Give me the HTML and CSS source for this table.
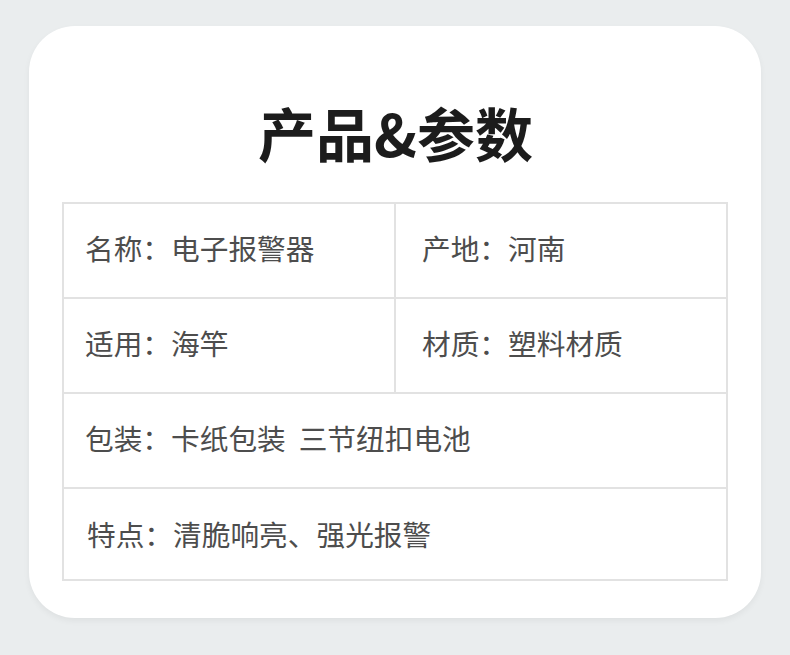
FILE: index.html
```html
<!DOCTYPE html>
<html lang="zh-CN">
<head>
<meta charset="utf-8">
<link rel="stylesheet" href="styles.css">
</head>
<body>
<div class="page">
  <div class="card">
    <h1 class="title">产品&amp;参数</h1>
    <table class="params">
      <tr>
        <td class="cell left">名称：电子报警器</td>
        <td class="cell right">产地：河南</td>
      </tr>
      <tr>
        <td class="cell left">适用：海竿</td>
        <td class="cell right">材质：塑料材质</td>
      </tr>
      <tr>
        <td class="cell left" colspan="2">包装：卡纸包装&nbsp;&nbsp;三节纽扣电池</td>
      </tr>
      <tr>
        <td class="cell left last" colspan="2">特点：清脆响亮、强光报警</td>
      </tr>
    </table>
  </div>
</div>
</body>
</html>
```
FILE: styles.css
```css
html, body {
  margin: 0;
  padding: 0;
  background: #eaedee;
}
.page {
  width: 790px;
  height: 655px;
  padding: 26px 29px 0 29px;
  box-sizing: border-box;
}
.card {
  width: 732px;
  height: 592px;
  background: #ffffff;
  border-radius: 46px;
  box-shadow: 0 3px 6px rgba(0,0,0,0.05);
  box-sizing: border-box;
  padding: 0 32px 0 33px;
  display: flex;
  flex-direction: column;
  align-items: stretch;
}
.title {
  margin: 0;
  height: 176px;
  display: flex;
  align-items: center;
  justify-content: center;
  padding-top: 52px;
  padding-bottom: 16px;
  box-sizing: border-box;
  font-family: "Noto Sans CJK SC", "Noto Sans", sans-serif;
  font-weight: 700;
  font-size: 58px;
  color: #1c1c1c;
  line-height: 1;
  letter-spacing: 0;
}
.params {
  border-collapse: collapse;
  width: 666px;
  table-layout: fixed;
  font-family: "Noto Sans CJK SC", "Noto Sans", sans-serif;
  font-size: 28.7px;
  color: #4d4d4d;
}
.cell {
  border: 2px solid #e2e2e2;
  height: 89px;
  padding: 0 0 4px 21px;
  line-height: 1;
  vertical-align: middle;
}
.cell.right {
  padding-left: 26px;
}
.cell.last {
  height: 84px;
  padding-top: 3px;
  padding-bottom: 3px;
  padding-left: 23px;
}
```
